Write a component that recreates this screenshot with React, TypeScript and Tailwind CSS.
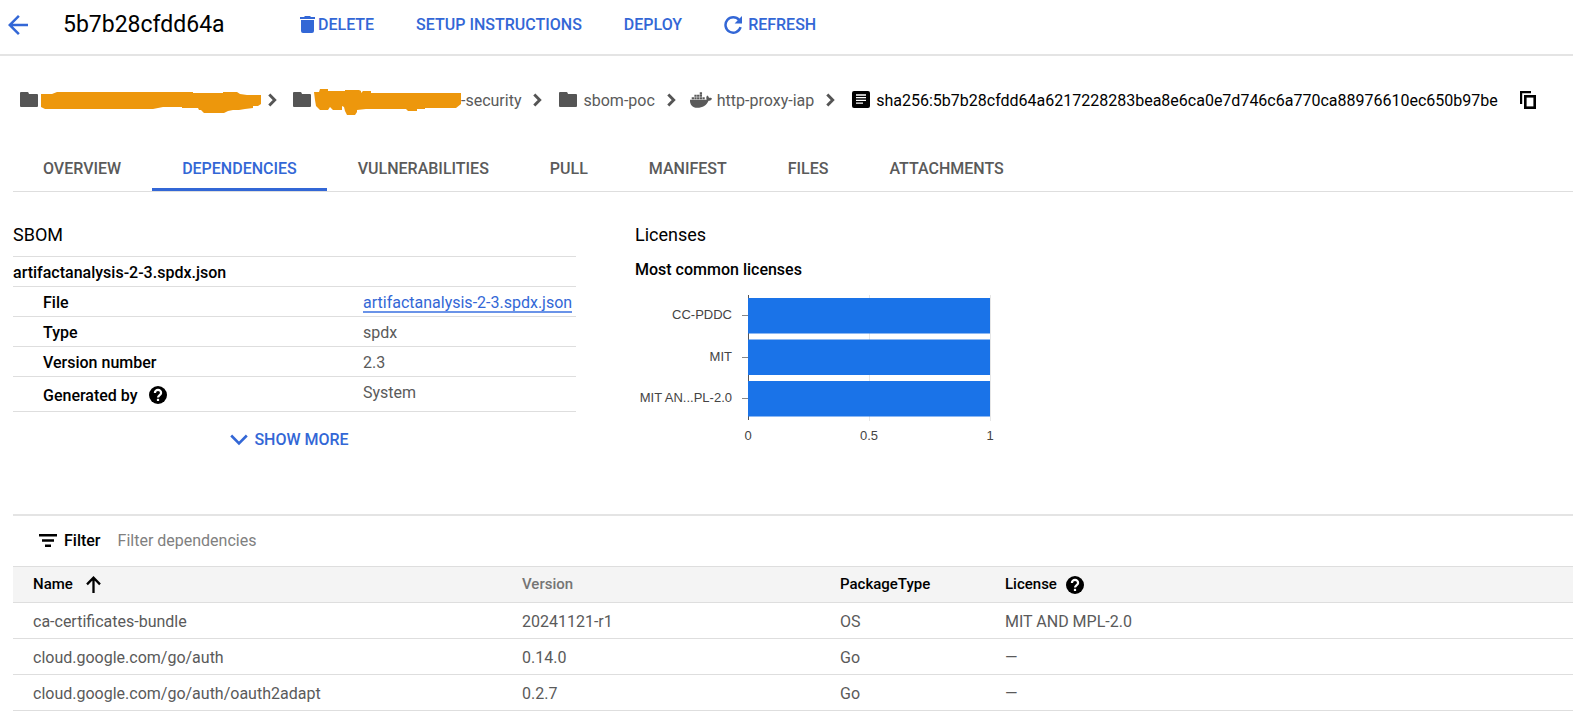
import React from "react";
import { MdArrowBack } from "react-icons/md";
import { FaDocker } from "react-icons/fa";

const tabs = ["OVERVIEW", "DEPENDENCIES", "VULNERABILITIES", "PULL", "MANIFEST", "FILES", "ATTACHMENTS"];

const dependencies = [
  { name: "ca-certificates-bundle", version: "20241121-r1", type: "OS", license: "MIT AND MPL-2.0" },
  { name: "cloud.google.com/go/auth", version: "0.14.0", type: "Go", license: "—" },
  { name: "cloud.google.com/go/auth/oauth2adapt", version: "0.2.7", type: "Go", license: "—" },
];

const licenses = [
  { label: "CC-PDDC", count: 1 },
  { label: "MIT", count: 1 },
  { label: "MIT AN...PL-2.0", count: 1 },
];

function FolderIcon() {
  return (
    <svg width="18" height="16" viewBox="0 0 18 16" fill="#555" aria-hidden="true" className="shrink-0">
      <path d="M1 0H7.5Q8.4 0 8.6 1L9 2H17Q18 2 18 3V14Q18 15 17 15H1Q0 15 0 14V1Q0 0 1 0Z" />
    </svg>
  );
}

function Chevron() {
  return (
    <svg width="9" height="14" viewBox="0 0 9 14" fill="none" stroke="#555" strokeWidth="2.9" aria-hidden="true" className="shrink-0">
      <path d="M1.3 1.5L6.7 7L1.3 12.5" />
    </svg>
  );
}

function DeleteIcon() {
  return (
    <svg width="15" height="17" viewBox="0 0 15 17" fill="currentColor" aria-hidden="true">
      <path d="M0 1H4L5 0H10L11 1H15V3H0ZM1 4H14V15Q14 17 12 17H3Q1 17 1 15Z" />
    </svg>
  );
}

function RefreshIcon() {
  return (
    <svg width="18" height="18" viewBox="0 0 18 18" fill="none" aria-hidden="true">
      <path d="M15.2 4.1A7.7 7.7 0 1 0 16.6 11.2" stroke="currentColor" strokeWidth="2.5" />
      <path d="M18 0V7.4H10.6Z" fill="currentColor" />
    </svg>
  );
}

function DigestIcon() {
  return (
    <svg width="18" height="18" viewBox="0 0 18 18" aria-hidden="true" className="shrink-0">
      <rect width="18" height="17" rx="2" fill="#000" />
      <path d="M4 4H14M4 6.7H14M4 9.4H14M4 12.1H11" stroke="#fff" strokeWidth="1.3" />
    </svg>
  );
}

function CopyIcon() {
  return (
    <svg width="16" height="18" viewBox="0 0 16 18" fill="none" stroke="#000" aria-hidden="true">
      <path d="M1.1 13V1.1H11" strokeWidth="2.2" />
      <rect x="5.3" y="5.3" width="9.4" height="11.4" strokeWidth="2.6" />
    </svg>
  );
}

function FilterIcon() {
  return (
    <svg width="18" height="13" viewBox="0 0 18 13" stroke="currentColor" strokeWidth="2.4" aria-hidden="true">
      <path d="M0 1.3H18M3 6.5H15M6 11.7H12" />
    </svg>
  );
}

function SortIcon() {
  return (
    <svg width="15" height="17" viewBox="0 0 15 17" fill="none" stroke="currentColor" strokeWidth="2.3" aria-hidden="true">
      <path d="M7.5 17V2M1 8.4L7.5 1.7L14 8.4" />
    </svg>
  );
}

function HelpIcon() {
  return (
    <svg width="18" height="18" viewBox="0 0 18 18" fill="none" aria-hidden="true">
      <circle cx="9" cy="9" r="9" fill="#000" />
      <path d="M5.9 7A3.1 3.1 0 0 1 12.1 7C12.1 9 9 9.2 9 11.6" stroke="#fff" strokeWidth="2.2" />
      <rect x="7.9" y="12.8" width="2.2" height="2.2" fill="#fff" />
    </svg>
  );
}

function ProjectMark() {
  return (
    <svg width="221" height="24" viewBox="0 -2 221 24" fill="#ed970c" aria-hidden="true" className="shrink-0 overflow-visible">
      <path d="M0 4H11L16 2H152V3H182V2H196L199 4L206 5H220V14L217 16H212V18L204 19L198 20L192 20L187 21L183 23H163L160 20H158L157 18H141V17H122L112 19H4L0 17Z" />
    </svg>
  );
}

function OrganizationMark() {
  return (
    <svg width="147" height="28" viewBox="0 -2 147 28" fill="#ed970c" aria-hidden="true" className="shrink-0 overflow-visible">
      <path d="M0 4H5L6 1H14V3H31V2H45L47 3V5L49 3H57V5H147V16L142 20H111V21H103V23H94L92 21H52L43 22V24L41 27H33L31 23L30 19L28 18V22H19L16 19L14 22H6L2 18L1 12Z" />
    </svg>
  );
}

function LicenseChart() {
  return (
    <svg width="376" height="160" viewBox="0 0 376 160" role="img" aria-label="Most common licenses" fontFamily="'Liberation Sans', Arial, sans-serif" fontSize="13" fill="#444">
      <path d="M234.5 2V128M355.5 2V128" stroke="#e6e6e6" />
      <path d="M113.5 2V127" stroke="#555" />
      {licenses.map((item, i) => {
        const top = 5 + i * 41.5;
        return (
          <g key={item.label}>
            <rect x="113" y={top} width={242 * item.count} height="35.5" fill="#1a73e8" />
            <path d={`M107 ${Math.round(top + 17) + 0.5}H113`} stroke="#888" />
            <text x="97" y={top + 21} textAnchor="end">{item.label}</text>
          </g>
        );
      })}
      <g textAnchor="middle">
        <text x="113" y="147">0</text>
        <text x="234" y="147">0.5</text>
        <text x="355" y="147">1</text>
      </g>
    </svg>
  );
}

function SbomRow({ label, children }: { label: React.ReactNode; children: React.ReactNode }) {
  return (
    <tr className="border-b border-[#dedede] align-top">
      <th scope="row" className="pt-1 pb-[2px] pl-[30px] text-left font-medium text-black">{label}</th>
      <td className="w-[213px] pt-1 pb-[2px] whitespace-nowrap">{children}</td>
    </tr>
  );
}

export default function App() {
  return (
    <div className="overflow-x-hidden bg-white font-['Roboto',sans-serif] text-base leading-[23px] text-[#5a5a5a]">
      <header className="flex h-14 items-center border-b-2 border-[#e4e4e4] pb-[5px] pl-[3px] font-medium text-[#3367d6]">
        <button type="button" aria-label="Back"><MdArrowBack size={30} /></button>
        <h1 className="ml-[30px] w-[237px] text-[23px] font-normal text-black">5b7b28cfdd64a</h1>
        <div className="flex items-center gap-[42px]">
          <button type="button" className="flex items-center gap-[3px]"><DeleteIcon />DELETE</button>
          <button type="button">SETUP INSTRUCTIONS</button>
          <button type="button">DEPLOY</button>
          <button type="button" className="flex items-center gap-[6px]"><RefreshIcon />REFRESH</button>
        </div>
      </header>

      <nav aria-label="Breadcrumb" className="flex h-[88px] items-center pl-5 whitespace-nowrap">
        <FolderIcon />
        <span className="ml-[3px]"><ProjectMark /></span>
        <span className="ml-[6px]"><Chevron /></span>
        <a href="#security" className="ml-4 flex items-center"><FolderIcon /><span className="ml-[3px]"><OrganizationMark /></span>-security</a>
        <span className="ml-3"><Chevron /></span>
        <a href="#sbom-poc" className="ml-[17px] flex items-center gap-[6px]"><FolderIcon />sbom-poc</a>
        <span className="ml-3"><Chevron /></span>
        <a href="#http-proxy-iap" className="ml-[14px] flex items-center gap-[5px]"><FaDocker size={22} />http-proxy-iap</a>
        <span className="ml-3"><Chevron /></span>
        <span className="ml-[17px] flex items-center gap-[6px] text-black">
          <DigestIcon />sha256:5b7b28cfdd64a6217228283bea8e6ca0e7d746c6a770ca88976610ec650b97be
        </span>
        <button type="button" aria-label="Copy digest" className="ml-[22px]"><CopyIcon /></button>
      </nav>

      <main className="pl-[13px]">
        <div role="tablist" className="flex gap-px border-b border-[#dedede] font-medium">
          {tabs.map((tab) => (
            <button
              key={tab}
              type="button"
              role="tab"
              aria-selected={tab === "DEPENDENCIES"}
              className="h-[47px] border-b-[3px] border-transparent px-[30px] pt-1 aria-selected:border-[#3367d6] aria-selected:text-[#3367d6]"
            >
              {tab}
            </button>
          ))}
        </div>

        <div className="flex gap-[59px] pt-[31px]">
          <section className="w-[563px]">
            <h2 className="text-[18px] text-black">SBOM</h2>
            <table className="mt-[10px] w-full border-t border-[#dedede]">
              <tbody>
                <tr className="border-b border-[#dedede]">
                  <th colSpan={2} className="pt-1 pb-[2px] text-left font-medium text-black">artifactanalysis-2-3.spdx.json</th>
                </tr>
                <SbomRow label="File">
                  <a href="#file" className="inline-block h-[22px] border-b-2 border-[#6a93e8] text-[#3367d6]">artifactanalysis-2-3.spdx.json</a>
                </SbomRow>
                <SbomRow label="Type">spdx</SbomRow>
                <SbomRow label="Version number">2.3</SbomRow>
                <SbomRow label={<span className="flex h-7 items-center gap-[11px]">Generated by<HelpIcon /></span>}>System</SbomRow>
              </tbody>
            </table>
            <button type="button" className="mt-4 flex w-full items-center justify-center gap-[6px] pr-[10px] font-medium text-[#3367d6]">
              <svg width="18" height="12" viewBox="0 0 18 12" fill="none" stroke="currentColor" strokeWidth="2.6" aria-hidden="true">
                <path d="M1.2 1.5L9 9.4L16.8 1.5" />
              </svg>
              SHOW MORE
            </button>
          </section>

          <section>
            <h2 className="text-[18px] text-black">Licenses</h2>
            <h3 className="my-3 font-medium text-black">Most common licenses</h3>
            <LicenseChart />
          </section>
        </div>

        <section className="mt-[61px] border-t-2 border-[#e4e4e4]">
          <div className="flex h-[50px] items-center pb-px pl-[26px]">
            <label htmlFor="filter" className="flex items-center gap-[7px] font-medium text-black"><FilterIcon />Filter</label>
            <input id="filter" type="text" placeholder="Filter dependencies" className="ml-[17px] flex-1 outline-none placeholder:text-[#808080]" />
          </div>
          <table className="w-full table-fixed border-t border-[#dedede] text-left">
            <colgroup>
              <col className="w-[509px]" />
              <col className="w-[318px]" />
              <col className="w-[165px]" />
              <col />
            </colgroup>
            <thead className="bg-[#f4f4f4] text-[15px] text-black">
              <tr className="h-9 border-b border-[#dedede]">
                <th className="pl-5 font-medium"><span className="flex items-center gap-[13px]">Name<SortIcon /></span></th>
                <th className="font-medium text-[#757575]">Version</th>
                <th className="font-medium">PackageType</th>
                <th className="font-medium"><span className="flex items-center gap-[9px]">License<HelpIcon /></span></th>
              </tr>
            </thead>
            <tbody>
              {dependencies.map((dep) => (
                <tr key={dep.name} className="h-9 border-b border-[#dedede]">
                  <td className="pt-px pl-5">{dep.name}</td>
                  <td className="pt-px">{dep.version}</td>
                  <td className="pt-px">{dep.type}</td>
                  <td className="pt-px">{dep.license}</td>
                </tr>
              ))}
            </tbody>
          </table>
        </section>
      </main>
    </div>
  );
}
